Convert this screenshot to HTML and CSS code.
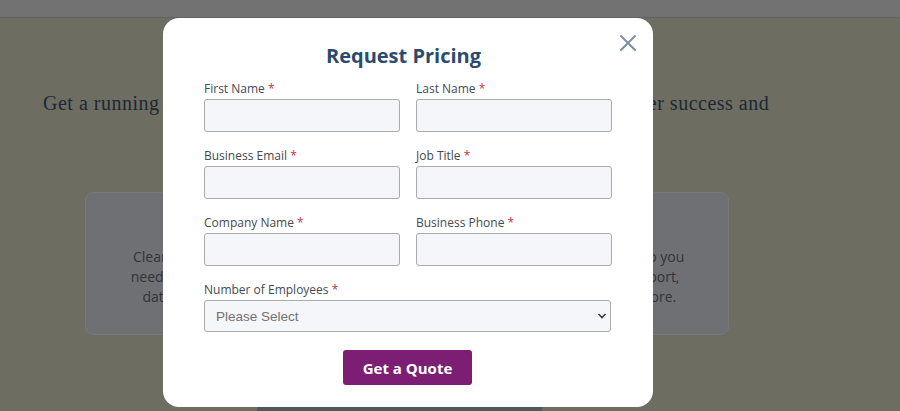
FILE: index.html
```html
<!DOCTYPE html>
<html lang="en">
<head>
<meta charset="utf-8">
<title>Request Pricing</title>
<link rel="stylesheet" href="styles.css">
</head>
<body>
<div class="page">
  <header class="topbar"></header>
  <section class="hero">
    <p class="lead">Get a running start with full onboarding, training and dedicated customer success and</p>
    <div class="cards">
      <div class="card"><p>Clear pricing for<br>need. No hidden<br>data &amp; more.</p></div>
      <div class="card"><p>Everything your<br>team needs to<br>grow faster.</p></div>
      <div class="card"><p>Dedicated to you<br>Expert support,<br>tips and more.</p></div>
    </div>
    <div class="strip"></div>
  </section>
</div>

<div class="modal" role="dialog" aria-labelledby="modal-title">
  <button class="close" aria-label="Close">
    <svg width="18" height="18" viewBox="0 0 18 18"><path d="M2 2 L16 16 M16 2 L2 16" stroke="#7d8ea2" stroke-width="2" stroke-linecap="round" fill="none"/></svg>
  </button>
  <h2 id="modal-title" class="title">Request Pricing</h2>
  <form class="form">
    <div class="grid">
      <div class="field"><label>First Name <span class="req">*</span></label><input type="text"></div>
      <div class="field"><label>Last Name <span class="req">*</span></label><input type="text"></div>
      <div class="field"><label>Business Email <span class="req">*</span></label><input type="email"></div>
      <div class="field"><label>Job Title <span class="req">*</span></label><input type="text"></div>
      <div class="field"><label>Company Name <span class="req">*</span></label><input type="text"></div>
      <div class="field"><label>Business Phone <span class="req">*</span></label><input type="tel"></div>
    </div>
    <div class="field full">
      <label>Number of Employees <span class="req">*</span></label>
      <div class="select-wrap">
        <select><option>Please Select</option></select>
        <svg class="chev" width="10" height="6" viewBox="0 0 10 6"><path d="M1.5 1 L5 4.5 L8.5 1" stroke="#3a3a3a" stroke-width="1.6" fill="none"/></svg>
      </div>
    </div>
    <div class="actions"><button type="button" class="submit">Get a Quote</button></div>
  </form>
</div>
</body>
</html>
```
FILE: styles.css
```css
* { box-sizing: border-box; }
html, body { margin: 0; padding: 0; }
body {
  width: 900px;
  height: 411px;
  overflow: hidden;
  background: #6d6d61;
  font-family: "Open Sans", "Liberation Sans", sans-serif;
  position: relative;
}
.page { height: 411px; display: flex; flex-direction: column; }
.topbar {
  height: 18px;
  background: #727272;
  border-bottom: 1px solid #626262;
  flex: none;
}
.hero {
  flex: 1;
  display: flex;
  flex-direction: column;
  align-items: flex-start;
  padding-left: 43px;
  position: relative;
}
.lead {
  margin: 70px 0 0 0;
  white-space: nowrap;
  font-family: "Liberation Serif", "DejaVu Serif", serif;
  font-size: 20px;
  letter-spacing: 0.5px;
  line-height: 30px;
  color: #1d2836;
}
.cards {
  margin-top: 74px;
  margin-left: 42px;
  display: flex;
  gap: 22px;
}
.card {
  width: 200px;
  height: 143px;
  background: #6f7073;
  border: 1px solid #77787a;
  border-radius: 8px;
  display: flex;
  align-items: flex-start;
  justify-content: center;
}
.card p {
  margin: 54px 0 0;
  text-align: center;
  font-size: 14px;
  line-height: 20px;
  color: #30343c;
}
.strip {
  position: absolute;
  left: 257px;
  bottom: 0;
  width: 285px;
  height: 4px;
  background: #4f5a58;
}

.modal {
  position: absolute;
  left: 163px;
  top: 18px;
  width: 490px;
  height: 389px;
  background: #ffffff;
  border-radius: 16px;
  padding: 24px 42px 0 41px;
}
.close {
  position: absolute;
  top: 16px;
  right: 16px;
  width: 18px;
  height: 18px;
  padding: 0;
  border: 0;
  background: none;
  display: flex;
}
.title {
  margin: 0 8px 0 0;
  text-align: center;
  font-size: 20px;
  line-height: 27px;
  font-weight: 700;
  color: #2c4a6e;
}
.form { margin-top: 11px; }
.grid {
  display: grid;
  grid-template-columns: 196px 196px;
  column-gap: 16px;
  row-gap: 15px;
}
.field label {
  display: block;
  font-size: 12px;
  line-height: 17px;
  margin-bottom: 2px;
  color: #454a50;
}
.req { color: #c2324d; }
.field input, .field select {
  display: block;
  width: 100%;
  height: 33px;
  background: #f4f6f9;
  border: 1px solid #ababab;
  border-radius: 3px;
  outline: none;
}
.full { margin-top: 15px; }
.select-wrap { position: relative; }
.field select {
  height: 32px;
  appearance: none;
  -webkit-appearance: none;
  padding: 0 11px;
  font-family: "Liberation Sans", Arial, sans-serif;
  font-size: 13.5px;
  color: #727272;
}
.chev {
  position: absolute;
  right: 4px;
  top: 13px;
}
.actions {
  display: flex;
  justify-content: center;
  margin-top: 18px;
}
.submit {
  width: 129px;
  height: 35px;
  background: #7c1f74;
  color: #ffffff;
  border: 0;
  border-radius: 3px;
  font-family: "Open Sans", "Liberation Sans", sans-serif;
  font-weight: 700;
  font-size: 15px;
}
```
